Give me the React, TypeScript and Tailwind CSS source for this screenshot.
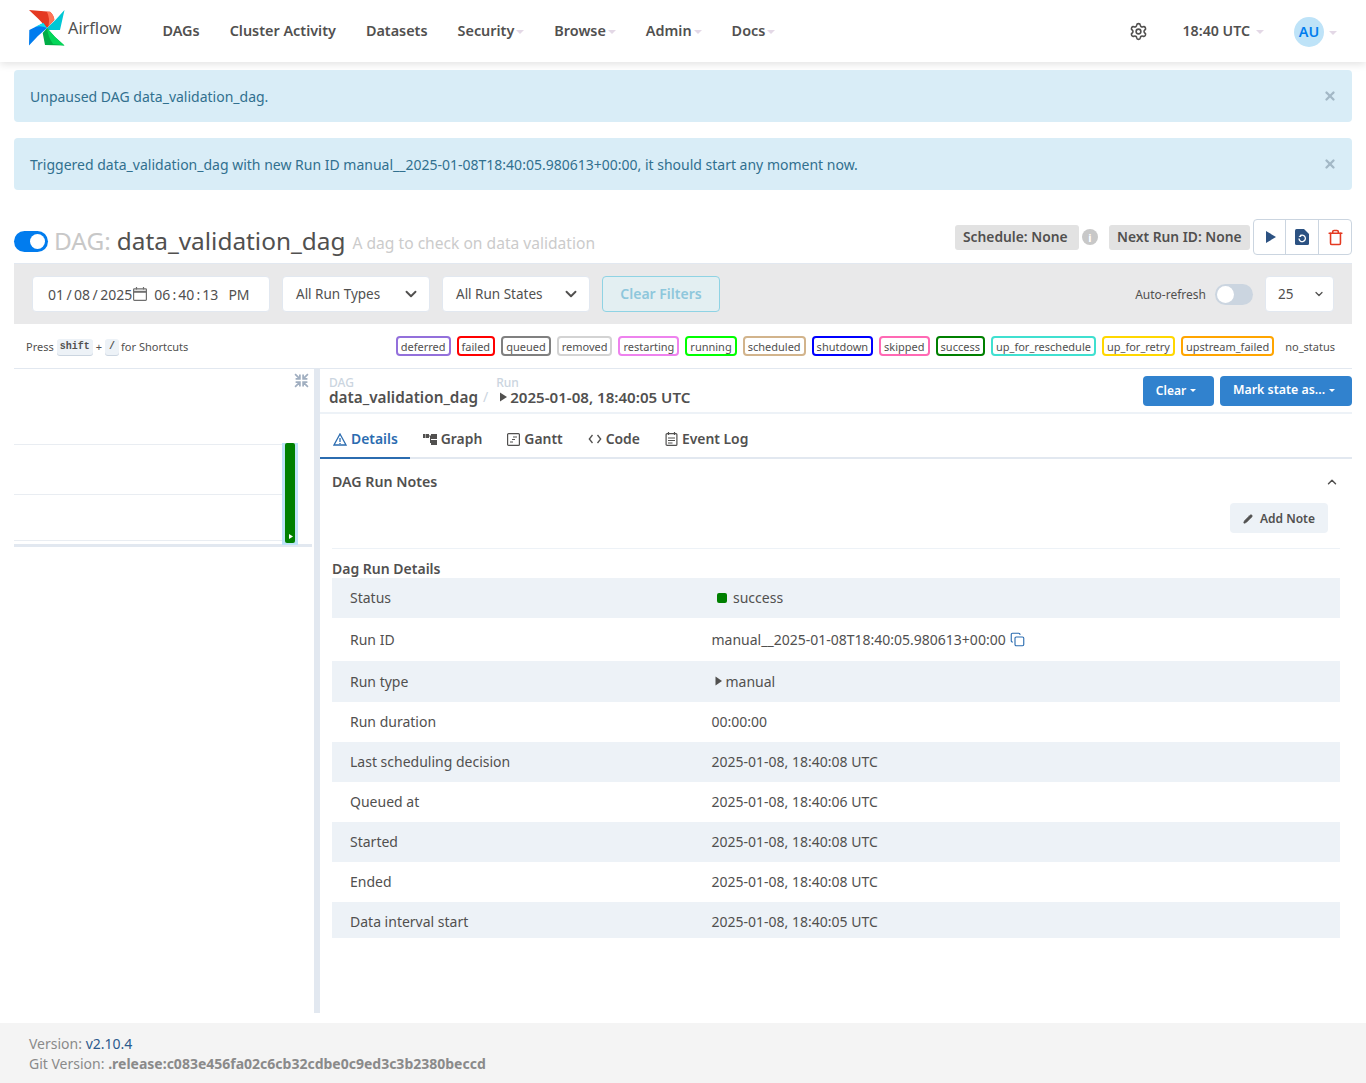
import { ChevronDown, ChevronUp, Copy, Pencil, Settings, Trash, X } from "lucide-react";

const states = [
  { name: "deferred", border: "border-[#9370db]" },
  { name: "failed", border: "border-[#ff0000]" },
  { name: "queued", border: "border-[#808080]" },
  { name: "removed", border: "border-[#d3d3d3]" },
  { name: "restarting", border: "border-[#ee82ee]" },
  { name: "running", border: "border-[#00ff00]" },
  { name: "scheduled", border: "border-[#d2b48c]" },
  { name: "shutdown", border: "border-[#0000ff]" },
  { name: "skipped", border: "border-[#ff69b4]" },
  { name: "success", border: "border-[#008000]" },
  { name: "up_for_reschedule", border: "border-[#40e0d0]" },
  { name: "up_for_retry", border: "border-[#ffd700]" },
  { name: "upstream_failed", border: "border-[#ffa500]" },
  { name: "no_status", border: "border-transparent" },
];

const times = [
  { label: "Run duration", value: "00:00:00" },
  { label: "Last scheduling decision", value: "2025-01-08, 18:40:08 UTC" },
  { label: "Queued at", value: "2025-01-08, 18:40:06 UTC" },
  { label: "Started", value: "2025-01-08, 18:40:08 UTC" },
  { label: "Ended", value: "2025-01-08, 18:40:08 UTC" },
  { label: "Data interval start", value: "2025-01-08, 18:40:05 UTC" },
];

function Caret() {
  return <span className="ml-0.5 mt-0.5 inline-block size-0 border-x-4 border-t-4 border-x-transparent border-t-[#e3d8e6]" />;
}

function Logo() {
  return (
    <svg width="36" height="36" viewBox="0 0 36 36" className="shrink-0">
      <path d="M0 0 L21 1.7 Q25 5 25.3 10 L18 18 Q10 9 0 0Z" fill="#e43921" />
      <path d="M18 2 L21 1.7 Q25 5 25.3 10 L19.5 16 Q21 8 18 2Z" fill="#ff7557" />
      <path d="M35.5 0 L31 20 L18 20 L18 18 Q27 10 35.5 0Z" fill="#00c7d4" />
      <path d="M35.5 35.5 L16 35 L13.7 23 L18 18 Q26 28 35.5 35.5Z" fill="#00ad46" />
      <path d="M18 18 Q26 28 35.5 35.5 L24 34 Q19 27 18 18Z" fill="#04d659" />
      <path d="M0 35.5 L0.3 20 L14.3 13 L18 18 Q8 26 0 35.5Z" fill="#017cee" />
      <path d="M6 17 L14.3 13 L18 18 Q12 15 6 17Z" fill="#11e1ee" />
    </svg>
  );
}

function NavItem({ label, menu }: { label: string; menu?: boolean }) {
  return (
    <div className="flex items-center">
      <span className="text-[14.4px] font-semibold text-[#51504f]">{label}</span>
      {menu && <Caret />}
    </div>
  );
}

function Header() {
  return (
    <header className="flex h-[62px] items-center bg-white px-[29px] shadow-[0_2px_8px_rgba(0,0,0,0.12)]">
      <div className="mb-[6px] flex items-center">
        <Logo />
        <span className="ml-[3px] text-[16.3px] text-[#51504f]">Airflow</span>
      </div>
      <nav className="ml-[41px] flex gap-[30px]">
        <NavItem label="DAGs" />
        <NavItem label="Cluster Activity" />
        <NavItem label="Datasets" />
        <NavItem label="Security" menu />
        <NavItem label="Browse" menu />
        <NavItem label="Admin" menu />
        <NavItem label="Docs" menu />
      </nav>
      <div className="ml-auto flex items-center">
        <Settings className="size-[19px] text-[#51504f]" strokeWidth={2} />
        <div className="ml-[34px] flex items-center gap-1">
          <span className="text-[14.2px] font-semibold text-[#51504f]">18:40 UTC</span>
          <Caret />
        </div>
        <div className="ml-[30px] mt-[2px] flex items-center gap-[3px]">
          <span className="flex size-[30px] items-center justify-center rounded-full bg-[#bee3f8] text-[14.4px] font-semibold text-[#017cee]">AU</span>
          <Caret />
        </div>
      </div>
    </header>
  );
}

function Alert({ children }: { children: string }) {
  return (
    <div className="flex h-[52px] items-center justify-between rounded-[4px] bg-[#d9edf7] pl-4 pr-[15px] text-[14px] text-[#31708f]">
      <span>{children}</span>
      <X className="size-3.5 text-[#a3b8c6]" strokeWidth={4} />
    </div>
  );
}

function TitleRow() {
  return (
    <div className="flex h-[44px] items-center justify-between">
      <div className="flex items-center">
        <span className="flex h-[21px] w-[34px] items-center justify-end rounded-full bg-[#017cee] pr-[3px]">
          <span className="size-[15px] rounded-full bg-white" />
        </span>
        <span className="ml-1.5 text-[24.4px] leading-none text-[#c8c8c8]">DAG:</span>
        <span className="ml-[6px] text-[24.4px] leading-none text-[#51504f]">data_validation_dag</span>
        <span className="ml-[7px] mt-[6px] text-[15.6px] leading-none text-[#cbcbcb]">A dag to check on data validation</span>
      </div>
      <div className="mb-[8px] flex items-center">
        <span className="flex h-[25px] w-[124px] items-center rounded-[3px] bg-[#e2e2e2] pl-2 text-[13.8px] font-semibold text-[#51504f]">Schedule: None</span>
        <span className="ml-[3px] flex size-4 items-center justify-center rounded-full bg-[#c8c8c8] text-[11px] font-bold leading-none text-white">i</span>
        <span className="ml-[11px] flex h-[25px] w-[141px] items-center rounded-[3px] bg-[#e2e2e2] pl-2 text-[13.8px] font-semibold text-[#51504f]">Next Run ID: None</span>
        <div className="ml-[3px] flex h-[36px] rounded-[4px] border border-[#cbd5e0]">
          <span className="flex w-[32px] items-center justify-center border-r border-[#cbd5e0] pl-[2px]">
            <svg width="10" height="12" viewBox="0 0 10 12"><path d="M0 0 L10 6 L0 12Z" fill="#2c5282" /></svg>
          </span>
          <span className="flex w-[33px] items-center justify-center border-r border-[#cbd5e0]">
            <svg width="14" height="16" viewBox="0 0 14 16">
              <path d="M1.5 0 H9 L14 5 V14.5 Q14 16 12.5 16 H1.5 Q0 16 0 14.5 V1.5 Q0 0 1.5 0Z" fill="#2c5282" />
              <path d="M4 9.5 A3.2 3.2 0 1 0 5.5 6.7" fill="none" stroke="#fff" strokeWidth="1.3" />
              <path d="M6.2 5 V8 H3.6" fill="#fff" />
            </svg>
          </span>
          <span className="flex w-[32px] items-center justify-center">
            <Trash className="size-[17px] text-[#e43921]" strokeWidth={2.2} />
          </span>
        </div>
      </div>
    </div>
  );
}

function SelectBox({ label, w, small }: { label: string; w: string; small?: boolean }) {
  return (
    <div className={`flex h-[36px] items-center justify-between rounded-[4px] border border-[#e2e8f0] bg-white text-[13.5px] text-[#51504f] ${small ? "pl-3 pr-2" : "pl-[13px] pr-[9px]"} ${w}`}>
      <span>{label}</span>
      <ChevronDown className={small ? "size-3" : "size-[18px]"} strokeWidth={2.5} />
    </div>
  );
}

function FilterBar() {
  return (
    <div className="flex h-[61px] items-center border-t border-[#e2e8f0] bg-[#e9e9ea] px-[18px]">
      <div className="flex h-[36px] w-[238px] items-center rounded-[4px] border border-[#e2e8f0] bg-white pl-[15px] text-[14px] text-[#51504f]">
        <span className="[word-spacing:-1.2px]">01 / 08 / 2025</span>
        <svg width="14" height="14" viewBox="0 0 14 14" fill="none" stroke="#6f6f6f" strokeWidth="1.2" className="ml-px">
          <rect x="0.6" y="1.8" width="12.8" height="11.6" rx="0.8" />
          <path d="M0.6 4.8 H13.4" strokeWidth="2" />
          <path d="M3.5 0 V2.5 M10.5 0 V2.5" />
        </svg>
        <span className="ml-[7px] [word-spacing:-1.5px]">06 : 40 : 13</span>
        <span className="ml-[10px]">PM</span>
      </div>
      <div className="ml-3"><SelectBox label="All Run Types" w="w-[148px]" /></div>
      <div className="ml-3"><SelectBox label="All Run States" w="w-[148px]" /></div>
      <button type="button" className="ml-3 flex h-[36px] w-[118px] items-center justify-center rounded-[4px] border border-[#8fd3e4] bg-[#e3eff2] pb-[2px] text-[14px] font-semibold text-[#8ec7dc]">Clear Filters</button>
      <div className="ml-auto flex items-center">
        <span className="mt-[2px] text-[12px] text-[#51504f]">Auto-refresh</span>
        <span className="ml-[9px] flex h-[21px] w-[38px] items-center rounded-full bg-[#cbd5e0] pl-[2px]">
          <span className="size-[17px] rounded-full bg-white" />
        </span>
        <div className="ml-[12px]"><SelectBox label="25" w="w-[69px]" small /></div>
      </div>
    </div>
  );
}

function Legend() {
  return (
    <div className="flex h-[45px] items-center justify-between border-b border-[#e2e8f0] pl-3 pr-[12px]">
      <div className="mt-[2px] flex items-center text-[11px] text-[#51504f]">
        <span>Press</span>
        <kbd className="ml-[3px] rounded-[3px] bg-[#edf2f7] px-[3px] font-['Liberation_Mono'] text-[10px] font-bold leading-[16px] shadow-[0_1px_0_#cbd5e0]">shift</kbd>
        <span className="ml-[3px]">+</span>
        <kbd className="ml-[3px] rounded-[3px] bg-[#edf2f7] px-[4px] font-['Liberation_Mono'] text-[10px] font-bold leading-[16px] shadow-[0_1px_0_#cbd5e0]">/</kbd>
        <span className="ml-[2px]">for Shortcuts</span>
      </div>
      <div className="flex items-center gap-[6px]">
        {states.map((s) => (
          <span key={s.name} className={`flex h-[20px] items-center rounded-[4px] border-2 px-[3px] text-[11px] leading-none text-[#51504f] ${s.border}`}>{s.name}</span>
        ))}
      </div>
    </div>
  );
}

function GridPanel() {
  return (
    <div className="flex w-[306px] shrink-0">
      <div className="relative h-[179px] w-[300px] shrink-0">
        <svg width="15" height="15" viewBox="0 0 14 14" fill="none" stroke="#a0aec0" strokeWidth="1.6" className="absolute right-[5px] top-1">
          <path d="M1 1 L5.5 5.5 M5.5 1.5 V5.5 H1.5 M13 1 L8.5 5.5 M8.5 1.5 V5.5 H12.5 M1 13 L5.5 8.5 M5.5 12.5 V8.5 H1.5 M13 13 L8.5 8.5 M8.5 12.5 V8.5 H12.5" />
        </svg>
        <div className="mt-[75px] h-px w-[268px] bg-[#e9edf2]" />
        <div className="mt-[49px] h-px w-[268px] bg-[#e9edf2]" />
        <div className="mt-[45px] h-px w-[268px] bg-[#e9edf2]" />
        <div className="mt-[3px] h-[3px] w-[298px] bg-[#e2e8f0]" />
        <div className="absolute left-[268px] top-[74px] h-[102px] w-4 bg-[#bee3f8] px-[3px]">
          <div className="relative h-[100px] rounded-[2px] bg-[#008000]">
            <svg width="4" height="5" viewBox="0 0 4 5" className="absolute bottom-[4px] left-[3.5px]"><path d="M0 0 L4 2.5 L0 5Z" fill="#fff" /></svg>
          </div>
        </div>
      </div>
      <div className="h-[644px] w-[6px] shrink-0 bg-[#e2e8f0]" />
    </div>
  );
}

function Tabs() {
  const cls = "flex items-center gap-1 pb-[7px] pl-[13px] pr-3 pt-[15px] text-[13.9px] font-semibold";
  return (
    <div className="flex border-b-2 border-[#e2e8f0] text-[#51504f]">
      <div className={`${cls} -mb-[2px] border-b-2 border-[#2b6cb0] text-[#2b6cb0]`}>
        <svg width="14" height="13" viewBox="0 0 14 13" fill="none" stroke="#2b6cb0" strokeWidth="1.3"><path d="M7 1 L13 12 H1Z M7 5 V9 M7 10 V11" /></svg>
        Details
      </div>
      <div className={cls}>
        <svg width="14" height="13" viewBox="0 0 14 13" fill="#51504f"><rect x="0" y="1" width="2.5" height="4" /><rect x="3" y="1" width="3" height="4" /><rect x="6" y="2.5" width="2" height="1" /><rect x="8" y="1" width="6" height="5" /><rect x="8" y="7" width="6" height="5" /><rect x="7" y="3" width="1" height="7" /></svg>
        Graph
      </div>
      <div className={cls}>
        <svg width="13" height="13" viewBox="0 0 13 13" fill="none" stroke="#51504f" strokeWidth="1.2"><rect x="0.6" y="0.6" width="11.8" height="11.8" rx="1" /><path d="M6 4 H10 M5 6.5 H8 M3 9 H6" /></svg>
        Gantt
      </div>
      <div className={cls}>
        <svg width="14" height="10" viewBox="0 0 13 10" fill="none" stroke="#51504f" strokeWidth="1.3"><path d="M4 1 L0.8 5 L4 9 M9 1 L12.2 5 L9 9" /></svg>
        Code
      </div>
      <div className={cls}>
        <svg width="13" height="14" viewBox="0 0 12 14" fill="none" stroke="#51504f" strokeWidth="1.2"><rect x="0.6" y="1.6" width="10.8" height="11.8" rx="1" /><path d="M3 0 V3 M9 0 V3 M2.5 6 H9.5 M2.5 8.5 H9.5 M2.5 11 H7" /></svg>
        Event Log
      </div>
    </div>
  );
}

function DetailRow({ label, children, striped, h = "h-[40px]" }: { label: string; children: React.ReactNode; striped?: boolean; h?: string }) {
  return (
    <div className={`flex items-center pl-[18px] text-[14px] text-[#51504f] ${h} ${striped ? "bg-[#edf2f7]" : "bg-white"}`}>
      <span className="w-[361.5px] shrink-0">{label}</span>
      <div className="flex items-center">{children}</div>
    </div>
  );
}

function RunDetails() {
  return (
    <div className="min-w-0 flex-1">
      <div className="flex h-[45px] items-center justify-between border-b-2 border-[#edf2f7] pl-[9px]">
        <div className="flex items-start">
          <div className="flex flex-col">
            <span className="mt-px text-[12px] font-medium leading-[12px] text-[#cbd5e0]">DAG</span>
            <span className="text-[15.3px] font-semibold leading-[16px] text-[#51504f]">data_validation_dag</span>
          </div>
          <span className="ml-[5px] mt-[13px] text-[14px] leading-[16px] text-[#cbd5e0]">/</span>
          <div className="ml-[8px] flex flex-col">
            <span className="mt-px text-[12px] font-medium leading-[12px] text-[#cbd5e0]">Run</span>
            <span className="flex items-center gap-[2px] text-[15.1px] font-semibold leading-[16px] text-[#51504f]">
              <svg width="9" height="10" viewBox="0 0 9 10" className="ml-[3px]"><path d="M1 0.5 L8 5 L1 9.5Z" fill="#51504f" /></svg>
              2025-01-08, 18:40:05 UTC
            </span>
          </div>
        </div>
        <div className="flex gap-1.5">
          <button type="button" className="flex h-[30px] w-[71px] items-center justify-center gap-1 rounded-[4px] bg-[#3182ce] pr-[5px] text-[12px] font-semibold text-white">
            Clear <span className="size-0 border-x-[3.5px] border-t-[3.5px] border-x-transparent border-t-white" />
          </button>
          <button type="button" className="flex h-[30px] w-[132px] items-center justify-center gap-1 rounded-[4px] bg-[#3182ce] pr-[4px] text-[12.4px] font-semibold text-white">
            Mark state as... <span className="size-0 border-x-[3.5px] border-t-[3.5px] border-x-transparent border-t-white" />
          </button>
        </div>
      </div>
      <Tabs />
      <div className="px-3">
        <div className="flex h-[44px] items-center justify-between pr-[1px] pt-[2px]">
          <span className="text-[14.2px] font-semibold text-[#51504f]">DAG Run Notes</span>
          <ChevronUp className="size-[14px] text-[#51504f]" strokeWidth={2.5} />
        </div>
        <div className="flex h-[46px] justify-end border-b border-[#edf2f7] pr-3">
          <button type="button" className="flex h-[30px] w-[98px] items-center justify-center gap-[7px] rounded-[4px] bg-[#edf2f7] pt-[2px] text-[12px] font-semibold text-[#51504f]">
            <Pencil className="size-[10px] fill-[#51504f]" strokeWidth={2} />
            Add Note
          </button>
        </div>
        <p className="h-[29px] pt-[11px] text-[14px] font-semibold leading-[18px] text-[#51504f]">Dag Run Details</p>
        <div className="h-[360px] overflow-hidden">
          <DetailRow label="Status" striped>
            <span className="ml-[5.5px] size-[10px] rounded-[2px] bg-[#008000]" />
            <span className="ml-[6px]">success</span>
          </DetailRow>
          <DetailRow label="Run ID" h="h-[43px]">
            <span>manual__2025-01-08T18:40:05.980613+00:00</span>
            <Copy className="ml-1 size-[15px] text-[#2b6cb0]" strokeWidth={1.8} />
          </DetailRow>
          <DetailRow label="Run type" striped h="h-[41px]">
            <svg width="8" height="10" viewBox="0 0 8 10" className="ml-[3px]"><path d="M0.5 0.5 L7 5 L0.5 9.5Z" fill="#51504f" /></svg>
            <span className="ml-[3px]">manual</span>
          </DetailRow>
          {times.map((t, i) => (
            <DetailRow key={t.label} label={t.label} striped={i % 2 === 1}>
              <span>{t.value}</span>
            </DetailRow>
          ))}
        </div>
      </div>
    </div>
  );
}

function Footer() {
  return (
    <footer className="mt-[10px] flex h-[60px] flex-col justify-center bg-[#f4f4f4] pl-[29px] pt-[2px] text-[14px] leading-5 text-[#8a8a8a]">
      <div>Version: <span className="text-[#2c5a8c]">v2.10.4</span></div>
      <div>Git Version: <strong className="font-bold">.release:c083e456fa02c6cb32cdbe0c9ed3c3b2380beccd</strong></div>
    </footer>
  );
}

export default function App() {
  return (
    <div className="h-[1083px] overflow-hidden bg-white font-['Noto_Sans',sans-serif]">
      <Header />
      <div className="flex flex-col gap-4 px-[14px] pt-2">
        <Alert>Unpaused DAG data_validation_dag.</Alert>
        <Alert>Triggered data_validation_dag with new Run ID manual__2025-01-08T18:40:05.980613+00:00, it should start any moment now.</Alert>
      </div>
      <div className="px-[14px] pt-[29px]">
        <TitleRow />
        <FilterBar />
        <Legend />
        <div className="flex">
          <GridPanel />
          <RunDetails />
        </div>
      </div>
      <Footer />
    </div>
  );
}
